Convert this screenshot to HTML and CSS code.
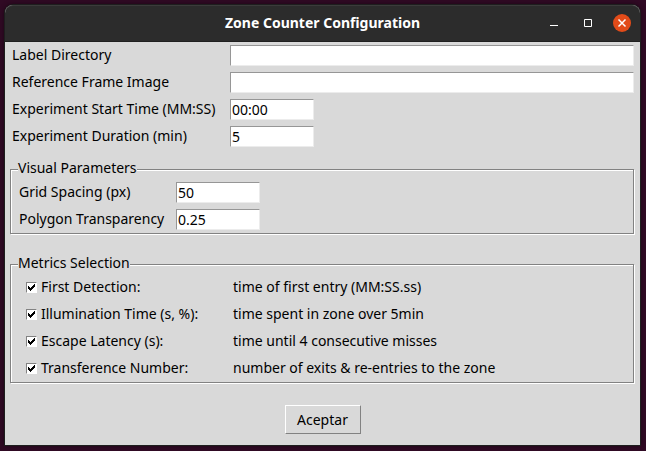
FILE: index.html
```html
<!DOCTYPE html>
<html lang="en">
<head>
<meta charset="utf-8">
<title>Zone Counter Configuration</title>
<link rel="stylesheet" href="styles.css">
</head>
<body>
<main class="window">
  <header class="titlebar">
    <h1 class="title">Zone Counter Configuration</h1>
    <div class="controls">
      <button class="control" type="button" aria-label="Minimize"><svg width="18" height="18" viewBox="0 0 18 18"><path d="M5 11.5h8" stroke="#fff" fill="none"/></svg></button>
      <button class="control" type="button" aria-label="Maximize"><svg width="18" height="18" viewBox="0 0 18 18"><path d="M5.500 5.500h7v7h-7z" stroke="#fff" fill="none"/></svg></button>
      <button class="control close" type="button" aria-label="Close"><svg width="18" height="18" viewBox="0 0 18 18"><path d="M5.500 5.500l7 7M12.500 5.500l-7 7" stroke="#fff" stroke-width="1.500" fill="none"/></svg></button>
    </div>
  </header>
  <form class="form">
    <div class="fields">
      <label for="dir">Label Directory</label><input class="entry wide" id="dir" type="text">
      <label for="frame">Reference Frame Image</label><input class="entry wide" id="frame" type="text">
      <label for="start">Experiment Start Time (MM:SS)</label><input class="entry" id="start" type="text" value="00:00">
      <label for="duration">Experiment Duration (min)</label><input class="entry" id="duration" type="text" value="5">
    </div>
    <fieldset class="group">
      <legend>Visual Parameters</legend>
      <div class="fields visual">
        <label for="grid">Grid Spacing (px)</label><input class="entry" id="grid" type="text" value="50">
        <label for="alpha">Polygon Transparency</label><input class="entry" id="alpha" type="text" value="0.25">
      </div>
    </fieldset>
    <fieldset class="group">
      <legend>Metrics Selection</legend>
      <div class="metrics">
        <label class="metric"><input class="check" type="checkbox" checked>First Detection:</label><span>time of first entry (MM:SS.ss)</span>
        <label class="metric"><input class="check" type="checkbox" checked>Illumination Time (s, %):</label><span>time spent in zone over 5min</span>
        <label class="metric"><input class="check" type="checkbox" checked>Escape Latency (s):</label><span>time until 4 consecutive misses</span>
        <label class="metric"><input class="check" type="checkbox" checked>Transference Number:</label><span>number of exits &amp; re-entries to the zone</span>
      </div>
    </fieldset>
    <button class="accept" type="button">Aceptar</button>
  </form>
</main>
</body>
</html>
```
FILE: styles.css
```css
* { box-sizing: border-box; }

body {
  display: flex;
  min-height: 100vh;
  margin: 0;
  padding: 5px 6px 6px 5px;
  background: #300a24;
  color: #000;
  font: 14px/19px "Noto Sans", sans-serif;
}

.window {
  display: flex;
  flex: 1;
  flex-direction: column;
  background: #d9d9d9;
  border-radius: 8px 8px 0 0;
  box-shadow: 0 0 0 1px #1e1e1e, 0 0 5px #12040e;
}

.titlebar {
  display: grid;
  grid-template-columns: 1fr auto 1fr;
  align-items: center;
  height: 37px;
  padding: 0 9px 1px;
  background: #2c2c2c;
  border-top: 1px solid #3b3b3b;
  border-bottom: 1px solid #202020;
  border-radius: 8px 8px 0 0;
}

.title {
  grid-column: 2;
  margin: 0;
  color: #fff;
  font: bold 14px/18px "Noto Sans", sans-serif;
}

.controls {
  display: flex;
  justify-content: flex-end;
  gap: 16px;
}

.control {
  width: 18px;
  height: 18px;
  padding: 0;
  background: none;
  border: 0;
  border-radius: 50%;
}

.control svg { display: block; }

.close { background: #e24b19; }

.form {
  display: flex;
  flex: 1;
  flex-direction: column;
  padding: 0 5px 11px;
}

.fields {
  display: grid;
  grid-template-columns: 218px 1fr;
  grid-auto-rows: 27px;
  align-items: center;
  padding: 0 1px 0 2px;
}

.fields label,
.metrics label,
.metrics span {
  padding-bottom: 2px;
}

.entry {
  width: 84px;
  height: 21px;
  padding: 0 1px 1px;
  background: #fff;
  border: 1px solid;
  border-color: #969696 #ececec #ececec #969696;
  color: #000;
  font: inherit;
}

.wide { width: 100%; }

.group {
  min-width: 0;
  margin: 9px 1px 0 0;
  padding: 0 7px;
  border: 1px solid #828282;
  box-shadow: 1px 1px #fff, inset 1px 1px #fff;
}

.group + .group { margin-top: 20px; }

.group legend {
  padding: 0 0 2px;
  background: #d9d9d9;
  line-height: 18px;
}

.visual {
  grid-template-columns: 157px 1fr;
  padding: 0 1px;
}

.metrics {
  display: grid;
  grid-template-columns: 207px 1fr;
  grid-auto-rows: 27px;
  align-items: center;
  padding-left: 8px;
}

.metric {
  display: flex;
  align-items: center;
  gap: 4px;
}

.check {
  appearance: none;
  width: 11px;
  height: 11px;
  margin: 2px 0 0;
  background: #fff;
  border: 1px solid;
  border-color: #828282 #fff #fff #828282;
}

.check:checked {
  background: #fff url("data:image/svg+xml,%3Csvg xmlns='http://www.w3.org/2000/svg' viewBox='0 0 9 9'%3E%3Cpath d='M1 3h1v1h1v1h1V4h1V3h1V2h1V1h1v3H7v1H6v1H5v1H4v1H3V7H2V6H1z'/%3E%3C/svg%3E") center / 9px 9px no-repeat;
}

.accept {
  align-self: center;
  width: 76px;
  height: 29px;
  margin-top: 22px;
  padding: 0;
  background: #d9d9d9;
  border: 1px solid;
  border-color: #fff #828282 #828282 #fff;
  color: #000;
  font: inherit;
}
```
